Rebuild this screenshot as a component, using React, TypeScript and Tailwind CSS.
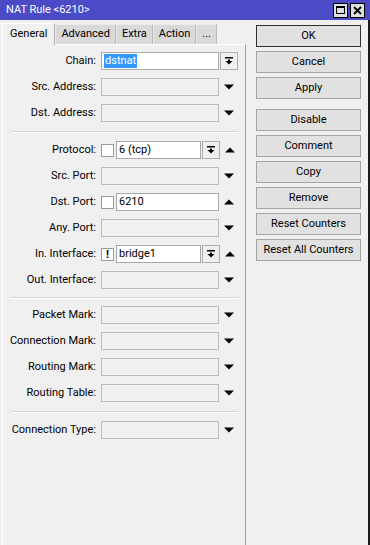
import type { ReactNode } from 'react';

const font = { fontFamily: 'Roboto, "Liberation Sans", sans-serif' };

function DropIcon() {
  return (
    <svg width="8" height="8" viewBox="0 0 8 8">
      <rect x="0" y="0" width="8" height="1.5" fill="#000" />
      <rect x="3" y="2.5" width="2" height="2" fill="#000" />
      <polygon points="0.5,4 7.5,4 4,7.5" fill="#000" />
    </svg>
  );
}

function Arrow({ up }: { up?: boolean }) {
  return (
    <svg width="10" height="6" viewBox="0 0 10 6">
      {up ? <polygon points="0,5.5 10,5.5 5,0.5" fill="#000" /> : <polygon points="0,0.5 10,0.5 5,5.5" fill="#000" />}
    </svg>
  );
}

function DropButton() {
  return (
    <div className="w-[18px] h-[18px] bg-[#f0f0f0] border border-[#adadad] flex items-center justify-center">
      <DropIcon />
    </div>
  );
}

function Input({ value, disabled, className }: { value?: ReactNode; disabled?: boolean; className: string }) {
  return (
    <div
      className={`${className} h-[18px] border flex items-center pl-[2px] text-black overflow-hidden whitespace-nowrap ${
        disabled ? 'bg-[#f0f0f0] border-[#bcbcbc]' : 'bg-white border-[#a8a8a8]'
      }`}
    >
      {value}
    </div>
  );
}

function Check({ mark }: { mark?: boolean }) {
  return (
    <div className="w-[13px] h-[13px] bg-white border border-[#9a9a9a] flex items-center justify-center text-[11px] font-bold leading-none mr-[2px]">
      {mark ? '!' : null}
    </div>
  );
}

function Row({ label, children }: { label: string; children: ReactNode }) {
  return (
    <div className="flex items-center h-[18px]">
      <div className="w-[93px] text-right text-black whitespace-nowrap">{label}</div>
      <div className="ml-[5px] flex items-center">{children}</div>
    </div>
  );
}

function Slot({ children }: { children?: ReactNode }) {
  return <div className="w-[19px] h-[18px] flex items-center justify-center pl-[1px]">{children}</div>;
}

function EmptyRow({ label }: { label: string }) {
  return (
    <Row label={label}>
      <Input disabled className="w-[118px]" />
      <Slot>
        <Arrow />
      </Slot>
    </Row>
  );
}

function Separator({ tight }: { tight?: boolean }) {
  return (
    <div className={`${tight ? 'mt-[8px] mb-[7px]' : 'mt-[9px] mb-[8px]'} ml-[8px] w-[227px]`}>
      <div className="h-px bg-[#d5d5d5]" />
      <div className="h-px bg-white" />
    </div>
  );
}

function Tab({ label, active }: { label: string; active?: boolean }) {
  if (active) {
    return (
      <div className="h-[22px] px-[7px] bg-[#f0f0f0] border-l border-t border-white border-r border-r-[#b0b0b0] flex items-center relative top-px">
        {label}
      </div>
    );
  }
  return (
    <div className="h-[20px] px-[5px] bg-[#d9d9d9] border-t border-l border-[#eaeaea] border-r border-r-[#b9b9b9] flex items-center">
      {label}
    </div>
  );
}

function SideButton({ label, primary, className = '' }: { label: string; primary?: boolean; className?: string }) {
  return (
    <div
      className={`h-[22px] w-[105px] bg-[#e1e1e1] border flex items-center justify-center text-black ${
        primary ? 'border-[#303030]' : 'border-[#a3a3a3]'
      } ${className}`}
    >
      {label}
    </div>
  );
}

export default function App() {
  return (
    <div className="w-[370px] h-[545px] bg-[#f0f0f0] flex flex-col overflow-hidden text-[11px]" style={font}>
      <div className="h-[20px] bg-[#4b4bc8] flex items-center pl-[6px] pr-[5px] shrink-0">
        <span className="text-white text-[11px]">NAT Rule &lt;6210&gt;</span>
        <div className="ml-auto flex gap-[2px]">
          <div className="w-[15px] h-[15px] bg-[#e0e0e0] border border-black flex items-center justify-center">
            <div className="w-[9px] h-[8px] border border-black border-t-2" />
          </div>
          <div className="w-[15px] h-[15px] bg-[#e0e0e0] border border-black flex items-center justify-center">
            <svg width="9" height="9" viewBox="0 0 9 9">
              <path d="M1 1 L8 8 M8 1 L1 8" stroke="#000" strokeWidth="1.8" />
            </svg>
          </div>
        </div>
      </div>

      <div className="flex-1 flex border-r-2 border-[#1a1a1a]">
        <div className="ml-[2px] w-[244px] flex flex-col">
          <div className="mt-[2px] h-[22px] flex items-end text-black">
            <Tab label="General" active />
            <Tab label="Advanced" />
            <Tab label="Extra" />
            <Tab label="Action" />
            <Tab label="..." />
          </div>
          <div className="flex-1 border-t border-l border-white border-r border-r-[#a0a0a0] pt-[7px]">
            <div className="flex flex-col gap-[8px]">
              <Row label="Chain:">
                <Input
                  className="w-[118px]"
                  value={<span className="bg-[#3399ff] text-white px-px leading-[14px]">dstnat</span>}
                />
                <div className="ml-px">
                  <DropButton />
                </div>
              </Row>
              <EmptyRow label="Src. Address:" />
              <EmptyRow label="Dst. Address:" />
            </div>
            <Separator />
            <div className="flex flex-col gap-[8px]">
              <Row label="Protocol:">
                <Check />
                <Input className="w-[85px]" value="6 (tcp)" />
                <div className="ml-px">
                  <DropButton />
                </div>
                <Slot>
                  <Arrow up />
                </Slot>
              </Row>
              <EmptyRow label="Src. Port:" />
              <Row label="Dst. Port:">
                <Check />
                <Input className="w-[103px]" value="6210" />
                <Slot>
                  <Arrow up />
                </Slot>
              </Row>
              <EmptyRow label="Any. Port:" />
              <Row label="In. Interface:">
                <Check mark />
                <Input className="w-[85px]" value="bridge1" />
                <div className="ml-px">
                  <DropButton />
                </div>
                <Slot>
                  <Arrow up />
                </Slot>
              </Row>
              <EmptyRow label="Out. Interface:" />
            </div>
            <Separator tight />
            <div className="flex flex-col gap-[8px]">
              <EmptyRow label="Packet Mark:" />
              <EmptyRow label="Connection Mark:" />
              <EmptyRow label="Routing Mark:" />
              <EmptyRow label="Routing Table:" />
            </div>
            <Separator />
            <EmptyRow label="Connection Type:" />
          </div>
        </div>

        <div className="ml-[10px] pt-[5px] flex flex-col gap-[4px]">
          <SideButton label="OK" primary />
          <SideButton label="Cancel" />
          <SideButton label="Apply" />
          <SideButton label="Disable" className="mt-[6px]" />
          <SideButton label="Comment" />
          <SideButton label="Copy" />
          <SideButton label="Remove" />
          <SideButton label="Reset Counters" />
          <SideButton label="Reset All Counters" />
        </div>
      </div>
    </div>
  );
}
